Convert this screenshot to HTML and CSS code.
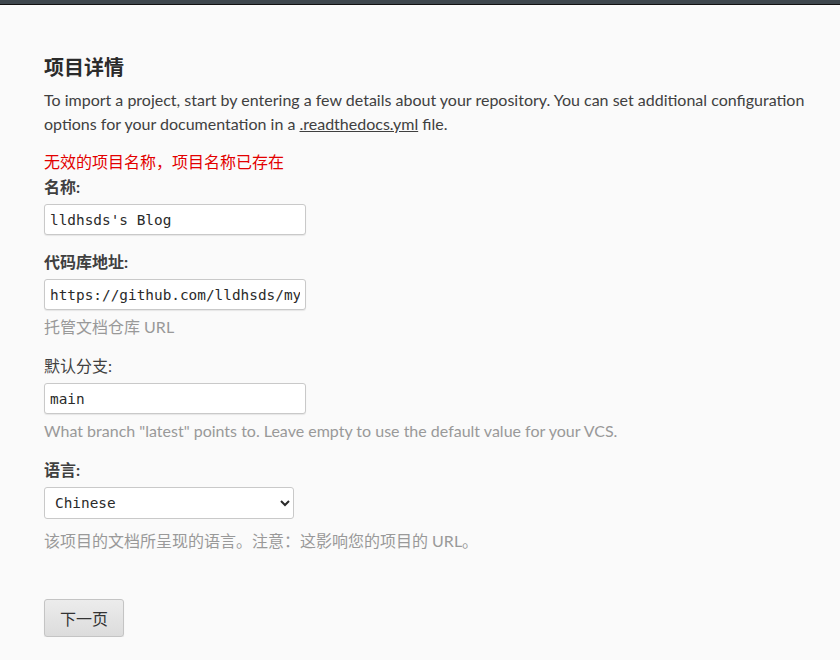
FILE: index.html
```html
<!DOCTYPE html>
<html lang="zh">
<head>
<meta charset="utf-8">
<title>项目详情</title>
<link rel="stylesheet" href="styles.css">
</head>
<body>
<div class="topbar"></div>
<main class="page">
  <h1 class="title">项目详情</h1>
  <p class="intro">To import a project, start by entering a few details about your repository. You can set additional configuration options for your documentation in a <a class="link" href="#">.readthedocs.yml</a> file.</p>
  <form class="form">
    <div class="error">无效的项目名称，项目名称已存在</div>
    <div class="field">
      <label class="label bold">名称:</label>
      <input class="input" type="text" value="lldhsds's Blog">
    </div>
    <div class="field">
      <label class="label bold">代码库地址:</label>
      <input class="input" type="text" value="https://github.com/lldhsds/myblog">
      <div class="help">托管文档仓库 URL</div>
    </div>
    <div class="field">
      <label class="label">默认分支:</label>
      <input class="input" type="text" value="main">
      <div class="help">What branch "latest" points to. Leave empty to use the default value for your VCS.</div>
    </div>
    <div class="field">
      <label class="label bold">语言:</label>
      <select class="select"><option>Chinese</option></select>
      <div class="help help-select">该项目的文档所呈现的语言。注意：这影响您的项目的 URL。</div>
    </div>
    <button class="btn" type="button">下一页</button>
  </form>
</main>
</body>
</html>
```
FILE: styles.css
```css
html, body {
  margin: 0;
  padding: 0;
  background: #fafafa;
}
body {
  font-family: Lato, "Noto Sans CJK SC", sans-serif;
  font-size: 16px;
  line-height: 24px;
  color: #404040;
}
.topbar {
  height: 4px;
  background: #3e474d;
  border-bottom: 1px solid #111;
}
.page {
  padding: 48px 44px 0 44px;
}
.title {
  margin: 0 0 7px 0;
  font-size: 20px;
  line-height: 28px;
  font-weight: 700;
  color: #2b2b2b;
}
.intro {
  margin: 0;
  width: 790px;
}
.link {
  color: #404040;
  text-decoration: underline;
}
.form {
  margin-top: 14px;
  display: flex;
  flex-direction: column;
  align-items: flex-start;
}
.error {
  color: #e30000;
  margin-bottom: 1px;
}
.field {
  display: flex;
  flex-direction: column;
  align-items: flex-start;
  margin-bottom: 15px;
}
.label {
  display: block;
  line-height: 24px;
  margin-bottom: 5px;
}
.bold {
  font-weight: 700;
}
.input {
  box-sizing: border-box;
  width: 262px;
  height: 31px;
  padding: 0 5px;
  font-family: "DejaVu Sans Mono", monospace;
  font-size: 14.4px;
  color: #2a2a2a;
  background: #fff;
  border: 1px solid #c9c9c9;
  border-radius: 3px;
  box-shadow: 0 1px 1px rgba(0,0,0,0.08);
}
.select {
  box-sizing: border-box;
  width: 250px;
  height: 32px;
  padding: 0 6px;
  font-family: "DejaVu Sans Mono", monospace;
  font-size: 14.4px;
  color: #2a2a2a;
  background: #fff;
  border: 1px solid #c9c9c9;
  border-radius: 3px;
}
.help {
  margin-top: 5px;
  color: #999;
}
.help-select {
  margin-top: 10px;
}
.btn {
  margin-top: 31px;
  box-sizing: border-box;
  width: 80px;
  height: 38px;
  font-family: "Noto Sans CJK SC", sans-serif;
  font-size: 16px;
  color: #333;
  background: linear-gradient(#ececec, #dcdcdc);
  border: 1px solid #c4c4c4;
  border-radius: 3px;
  box-shadow: 0 1px 1px rgba(0,0,0,0.1);
}
```
